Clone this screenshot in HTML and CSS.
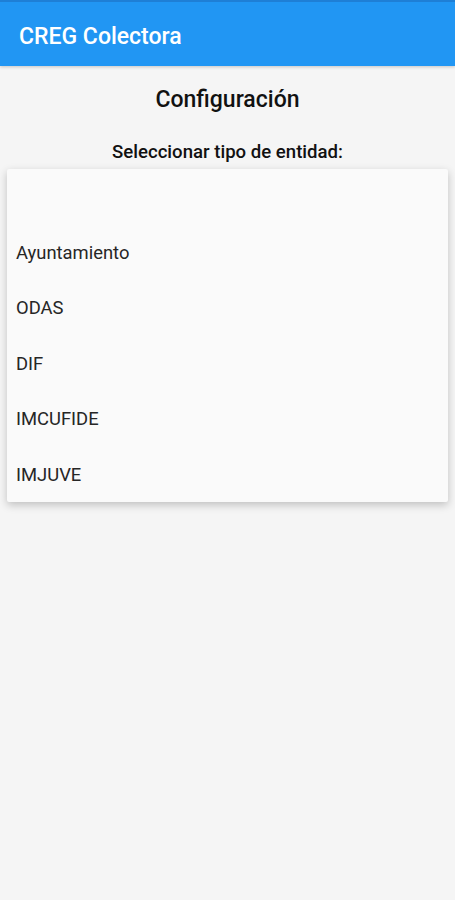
FILE: index.html
```html
<!DOCTYPE html>
<html lang="es">
<head>
  <meta charset="UTF-8" />
  <meta name="viewport" content="width=device-width, initial-scale=1.0" />
  <title>CREG Colectora</title>
  <link rel="stylesheet" href="styles.css">
</head>
<body>

  <header class="barra">
    <span class="barra-titulo">CREG Colectora</span>
  </header>

  <main class="contenido">
    <h1 class="titulo">Configuración</h1>
    <p class="etiqueta">Seleccionar tipo de entidad:</p>

    <ul class="menu">
      <li class="opcion"></li>
      <li class="opcion">Ayuntamiento</li>
      <li class="opcion">ODAS</li>
      <li class="opcion">DIF</li>
      <li class="opcion">IMCUFIDE</li>
      <li class="opcion">IMJUVE</li>
    </ul>
  </main>

</body>
</html>
```

FILE: styles.css
```css
body {
  margin: 0;
  height: 900px;
  font-family: Roboto, "Noto Sans", Arial, sans-serif;
  background: #f5f5f5;
  color: #212121;
}
.barra {
  height: 64px;
  background: #2196f3;
  border-top: 2px solid #1e7fd6;
  display: flex;
  align-items: center;
  padding: 0 19px;
  box-shadow: 0 1px 3px rgba(0, 0, 0, 0.2);
}
.barra-titulo {
  color: #fff;
  font-size: 23px;
  font-weight: 500;
  margin-top: 4px;
}
.contenido {
  padding: 0 7px;
}
.titulo {
  margin: 0;
  padding-top: 20px;
  text-align: center;
  font-size: 23px;
  font-weight: 500;
  line-height: 28px;
  color: #111;
}
.etiqueta {
  margin: 0;
  padding-top: 27px;
  text-align: center;
  font-size: 18.6px;
  font-weight: 500;
  line-height: 22px;
  color: #111;
}
.menu {
  list-style: none;
  margin: 6px 0 0;
  padding: 0;
  background: #fafafa;
  box-shadow: 0 3px 8px rgba(0, 0, 0, 0.22);
  border-radius: 2px;
}
.opcion {
  height: 55.5px;
  display: flex;
  align-items: center;
  padding: 0 9px;
  font-size: 18.4px;
  color: #262626;
}
```
